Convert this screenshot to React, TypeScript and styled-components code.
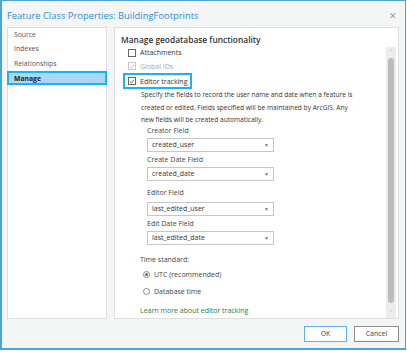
import * as React from 'react';
import styled, { createGlobalStyle } from 'styled-components';

const GlobalStyle = createGlobalStyle`
  html, body {
    margin: 0;
    padding: 0;
    background: #ffffff;
  }
  body {
    font-family: 'Open Sans', 'Noto Sans', sans-serif;
  }
`;

const Dialog = styled.div`
  width: 406px;
  height: 350px;
  box-sizing: border-box;
  border: 1px solid #4fa3dc;
  border-left-width: 2px;
  border-bottom-width: 2px;
  background: #f4f6f6;
  display: flex;
  flex-direction: column;
`;

const TitleBar = styled.div`
  height: 26px;
  display: flex;
  align-items: center;
  justify-content: space-between;
  padding: 0 8px 0 5px;
`;

const Title = styled.span`
  color: #2b8ed6;
  font-size: 9.4px;
  padding-top: 3px;
`;

const Close = styled.span`
  color: #9a9a9a;
  font-size: 9px;
  padding-top: 2px;
`;

const Body = styled.div`
  height: 292px;
  display: flex;
  gap: 7px;
  padding: 0 6px 0 5px;
`;

const NavPanel = styled.div`
  width: 100px;
  box-sizing: border-box;
  background: #ffffff;
  border: 1px solid #dedede;
  display: flex;
  flex-direction: column;
`;

const NavItem = styled.div<{ $selected?: boolean }>`
  height: 14.6px;
  box-sizing: border-box;
  display: flex;
  align-items: center;
  padding-left: 5px;
  font-size: 6.8px;
  color: ${({ $selected }) => ($selected ? '#222' : '#555')};
  font-weight: ${({ $selected }) => ($selected ? 700 : 400)};
  background: ${({ $selected }) => ($selected ? '#aad8f4' : 'transparent')};
  border: 2px solid ${({ $selected }) => ($selected ? '#1cb2ee' : 'transparent')};
  margin: 0 -1px;
  &:first-child {
    margin-top: -1px;
  }
`;

const ContentPanel = styled.div`
  flex: 1;
  box-sizing: border-box;
  background: #ffffff;
  border: 1px solid #dedede;
  display: flex;
`;

const Content = styled.div`
  flex: 1;
  padding: 5px 0 0 6px;
  color: #333;
`;

const Heading = styled.div`
  font-size: 8.4px;
  font-weight: 600;
  color: #333;
  height: 13px;
  line-height: 13px;
`;

const CheckStack = styled.div`
  display: flex;
  flex-direction: column;
  align-items: flex-start;
`;

const CheckRow = styled.div<{ $focused?: boolean; $disabled?: boolean }>`
  display: inline-flex;
  align-items: center;
  gap: 4px;
  box-sizing: border-box;
  padding: 0 3px;
  margin-left: 2px;
  font-size: 7px;
  color: ${({ $disabled }) => ($disabled ? '#a8a8a8' : '#333')};
  border: 2px solid ${({ $focused }) => ($focused ? '#1cb2ee' : 'transparent')};
  height: ${({ $focused }) => ($focused ? '16px' : '13.5px')};
`;

const Box = styled.span<{ $disabled?: boolean }>`
  width: 8px;
  height: 8px;
  box-sizing: border-box;
  border: 1px solid ${({ $disabled }) => ($disabled ? '#c8c8c8' : '#666')};
  background: #fff;
  display: flex;
  align-items: center;
  justify-content: center;
`;

const Description = styled.p`
  margin: 0 0 0 20px;
  font-size: 6.6px;
  line-height: 12.5px;
  color: #333;
  white-space: nowrap;
`;

const Fields = styled.div`
  margin-left: 26px;
  display: flex;
  flex-direction: column;
`;

const FieldLabel = styled.div<{ $gap: number }>`
  font-size: 7px;
  color: #444;
  height: 8px;
  line-height: 8px;
  margin-top: ${({ $gap }) => $gap}px;
`;

const Select = styled.div<{ $gap: number }>`
  width: 127px;
  height: 14px;
  box-sizing: border-box;
  border: 1px solid #c6c6c6;
  display: flex;
  align-items: center;
  justify-content: space-between;
  padding: 0 4px;
  font-size: 7px;
  color: #333;
  margin-top: ${({ $gap }) => $gap}px;
`;

const Caret = styled.span`
  font-size: 5px;
  color: #777;
`;

const TimeStandard = styled.div`
  margin: 9px 0 0 19px;
  font-size: 7px;
  color: #444;
  height: 12px;
  line-height: 12px;
`;

const RadioRow = styled.div<{ $gap: number }>`
  display: flex;
  align-items: center;
  gap: 4px;
  margin: ${({ $gap }) => $gap}px 0 0 22px;
  height: 12px;
  font-size: 7px;
  color: #444;
`;

const Radio = styled.span<{ $on?: boolean }>`
  width: 7px;
  height: 7px;
  border-radius: 50%;
  box-sizing: border-box;
  border: 1px solid #888;
  display: flex;
  align-items: center;
  justify-content: center;
  &::after {
    content: '';
    width: 3px;
    height: 3px;
    border-radius: 50%;
    background: ${({ $on }) => ($on ? '#666' : 'transparent')};
  }
`;

const LearnMore = styled.a`
  display: block;
  margin: 7px 0 0 19px;
  font-size: 7px;
  color: #2d7a3a;
  text-decoration: none;
  height: 12px;
  line-height: 12px;
`;

const Scrollbar = styled.div`
  width: 10px;
  margin: 19px 2px 0 0;
  background: #ececec;
  display: flex;
  flex-direction: column;
  align-items: center;
`;

const Arrow = styled.span`
  height: 10px;
  font-size: 6px;
  line-height: 10px;
  color: #888;
`;

const Thumb = styled.div`
  flex: 1;
  width: 6px;
  border-radius: 3px;
  background: #bdbdbd;
  margin: 1px 0 5px;
`;

const Footer = styled.div`
  flex: 1;
  display: flex;
  justify-content: flex-end;
  align-items: center;
  gap: 7px;
  padding: 0 6px 0 0;
`;

const Button = styled.button<{ $primary?: boolean }>`
  height: 16px;
  width: ${({ $primary }) => ($primary ? 43 : 45)}px;
  box-sizing: border-box;
  border: 1px solid ${({ $primary }) => ($primary ? '#5db2ea' : '#8c8c8c')};
  background: #ffffff;
  font-family: 'Open Sans', sans-serif;
  font-size: 7px;
  color: #444;
  padding: 0;
`;

const Tick = ({ color }: { color: string }) => (
  <svg width="7" height="7" viewBox="0 0 8 8">
    <path d="M1.2 4.2 L3.2 6.2 L6.8 1.6" fill="none" stroke={color} strokeWidth="1" />
  </svg>
);

const fields = [
  { label: 'Creator Field', value: 'created_user', labelGap: 0, selectGap: 3 },
  { label: 'Create Date Field', value: 'created_date', labelGap: 4, selectGap: 3 },
  { label: 'Editor Field', value: 'last_edited_user', labelGap: 8, selectGap: 5 },
  { label: 'Edit Date Field', value: 'last_edited_date', labelGap: 4, selectGap: 3 },
];

const App = () => (
  <>
    <GlobalStyle />
    <Dialog>
      <TitleBar>
        <Title>Feature Class Properties: BuildingFootprints</Title>
        <Close>✕</Close>
      </TitleBar>
      <Body>
        <NavPanel>
          <NavItem>Source</NavItem>
          <NavItem>Indexes</NavItem>
          <NavItem>Relationships</NavItem>
          <NavItem $selected>Manage</NavItem>
        </NavPanel>
        <ContentPanel>
          <Content>
            <Heading>Manage geodatabase functionality</Heading>
            <CheckStack>
              <CheckRow>
                <Box />
                Attachments
              </CheckRow>
              <CheckRow $disabled>
                <Box $disabled>
                  <Tick color="#b5b5b5" />
                </Box>
                Global IDs
              </CheckRow>
              <CheckRow $focused>
                <Box>
                  <Tick color="#333" />
                </Box>
                Editor tracking
              </CheckRow>
            </CheckStack>
            <Description>
              Specify the fields to record the user name and date when a feature is
              <br />
              created or edited. Fields specified will be maintained by ArcGIS. Any
              <br />
              new fields will be created automatically.
            </Description>
            <Fields>
              {fields.map((f) => (
                <React.Fragment key={f.label}>
                  <FieldLabel $gap={f.labelGap}>{f.label}</FieldLabel>
                  <Select $gap={f.selectGap}>
                    {f.value}
                    <Caret>▼</Caret>
                  </Select>
                </React.Fragment>
              ))}
            </Fields>
            <TimeStandard>Time standard:</TimeStandard>
            <RadioRow $gap={3}>
              <Radio $on />
              UTC (recommended)
            </RadioRow>
            <RadioRow $gap={5}>
              <Radio />
              Database time
            </RadioRow>
            <LearnMore>Learn more about editor tracking</LearnMore>
          </Content>
          <Scrollbar>
            <Arrow>˄</Arrow>
            <Thumb />
            <Arrow>˅</Arrow>
          </Scrollbar>
        </ContentPanel>
      </Body>
      <Footer>
        <Button $primary>OK</Button>
        <Button>Cancel</Button>
      </Footer>
    </Dialog>
  </>
);

export default App;
